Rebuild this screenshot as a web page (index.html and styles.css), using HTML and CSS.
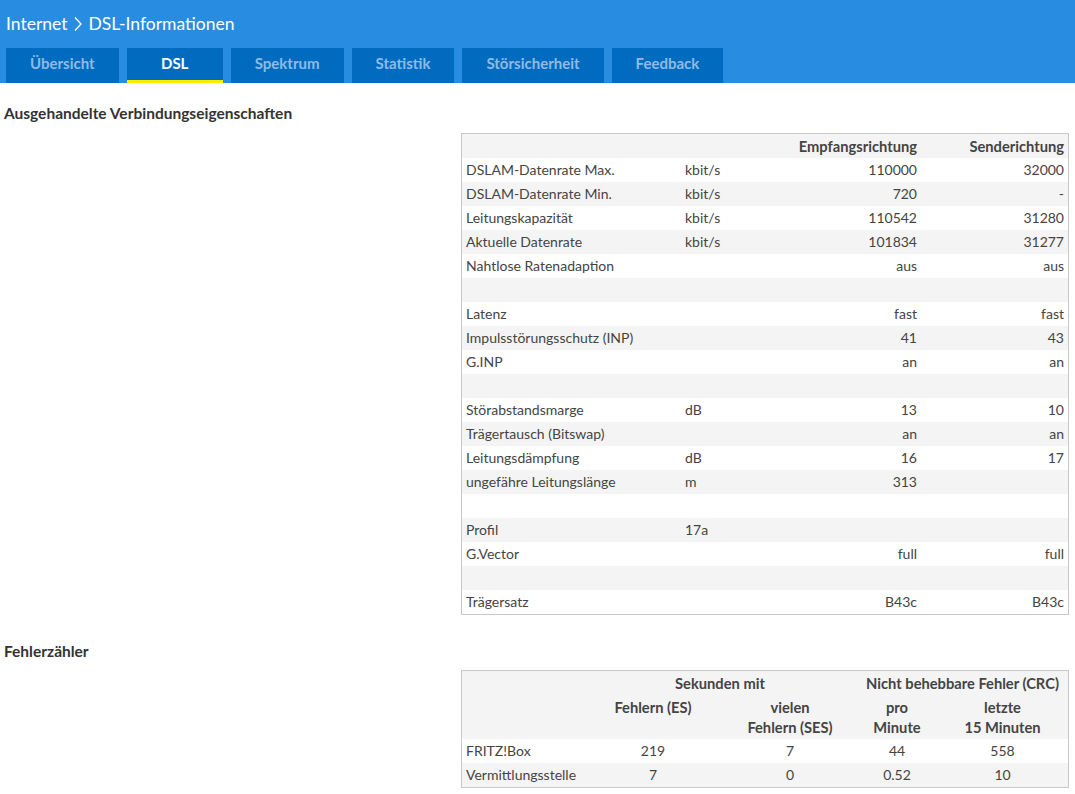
FILE: index.html
```html
<!DOCTYPE html>
<html lang="de">
<head>
<meta charset="utf-8">
<title>DSL-Informationen</title>
<link rel="stylesheet" href="styles.css">
</head>
<body>
<header class="top">
  <h1 class="crumb"><span>Internet</span><svg class="chev" width="8" height="16" viewBox="0 0 8 16"><polyline points="1,1.5 7,8 1,14.5" fill="none" stroke="#fff" stroke-width="1.3"/></svg><span>DSL-Informationen</span></h1>
  <nav class="tabs">
    <a class="tab">Übersicht</a>
    <a class="tab active">DSL</a>
    <a class="tab">Spektrum</a>
    <a class="tab">Statistik</a>
    <a class="tab">Störsicherheit</a>
    <a class="tab">Feedback</a>
  </nav>
</header>
<main class="content">
  <h2 class="sec">Ausgehandelte Verbindungseigenschaften</h2>
  <table class="grid t1">
    <colgroup><col class="c1"><col class="c2"><col class="c3"><col class="c4"></colgroup>
    <thead>
      <tr><th></th><th></th><th class="r">Empfangsrichtung</th><th class="r">Senderichtung</th></tr>
    </thead>
    <tbody>
      <tr><td>DSLAM-Datenrate Max.</td><td>kbit/s</td><td class="r">110000</td><td class="r">32000</td></tr>
      <tr><td>DSLAM-Datenrate Min.</td><td>kbit/s</td><td class="r">720</td><td class="r">-</td></tr>
      <tr><td>Leitungskapazität</td><td>kbit/s</td><td class="r">110542</td><td class="r">31280</td></tr>
      <tr><td>Aktuelle Datenrate</td><td>kbit/s</td><td class="r">101834</td><td class="r">31277</td></tr>
      <tr><td>Nahtlose Ratenadaption</td><td></td><td class="r">aus</td><td class="r">aus</td></tr>
      <tr><td></td><td></td><td></td><td></td></tr>
      <tr><td>Latenz</td><td></td><td class="r">fast</td><td class="r">fast</td></tr>
      <tr><td>Impulsstörungsschutz (INP)</td><td></td><td class="r">41</td><td class="r">43</td></tr>
      <tr><td>G.INP</td><td></td><td class="r">an</td><td class="r">an</td></tr>
      <tr><td></td><td></td><td></td><td></td></tr>
      <tr><td>Störabstandsmarge</td><td>dB</td><td class="r">13</td><td class="r">10</td></tr>
      <tr><td>Trägertausch (Bitswap)</td><td></td><td class="r">an</td><td class="r">an</td></tr>
      <tr><td>Leitungsdämpfung</td><td>dB</td><td class="r">16</td><td class="r">17</td></tr>
      <tr><td>ungefähre Leitungslänge</td><td>m</td><td class="r">313</td><td class="r"></td></tr>
      <tr><td></td><td></td><td></td><td></td></tr>
      <tr><td>Profil</td><td>17a</td><td></td><td></td></tr>
      <tr><td>G.Vector</td><td></td><td class="r">full</td><td class="r">full</td></tr>
      <tr><td></td><td></td><td></td><td></td></tr>
      <tr><td>Trägersatz</td><td></td><td class="r">B43c</td><td class="r">B43c</td></tr>
    </tbody>
  </table>

  <h2 class="sec sec2">Fehlerzähler</h2>
  <table class="grid t2">
    <colgroup><col class="d1"><col class="d2"><col class="d3"><col class="d4"><col class="d5"></colgroup>
    <thead>
      <tr><th rowspan="2"></th><th colspan="2" class="c">Sekunden mit</th><th colspan="2" class="c">Nicht behebbare Fehler (CRC)</th></tr>
      <tr class="sub"><th class="c">Fehlern (ES)</th><th class="c">vielen<br>Fehlern (SES)</th><th class="c">pro<br>Minute</th><th class="c">letzte<br>15 Minuten</th></tr>
    </thead>
    <tbody>
      <tr><td>FRITZ!Box</td><td class="c">219</td><td class="c">7</td><td class="c">44</td><td class="c">558</td></tr>
      <tr><td>Vermittlungsstelle</td><td class="c">7</td><td class="c">0</td><td class="c">0.52</td><td class="c">10</td></tr>
    </tbody>
  </table>
</main>
</body>
</html>
```

FILE: styles.css
```css
* { box-sizing: border-box; }
html, body { margin: 0; padding: 0; background: #fff; }
body {
  font-family: Lato, "Open Sans", sans-serif;
  font-size: 14px;
  color: #444;
}
.top {
  background: #288ce1;
  padding: 13px 0 0 6px;
}
.crumb {
  margin: 0;
  height: 22px;
  display: flex;
  align-items: center;
  font-size: 17.5px;
  font-weight: 400;
  line-height: 22px;
  color: #fff;
}
.chev { display: block; margin: 0 6px 0 7px; }
.tabs {
  display: flex;
  gap: 8px;
  margin-top: 13px;
}
.tab {
  display: block;
  height: 35px;
  min-width: 96px;
  padding: 0 24px;
  background: #006bbf;
  color: #8dbbe8;
  font-size: 15px;
  font-weight: 700;
  line-height: 31px;
  text-align: center;
}
.tab.active {
  color: #fff;
  border-bottom: 3px solid #ffed00;
}
.content {
  padding: 0 6px 0 4px;
}
.sec {
  margin: 0;
  padding-top: 21px;
  height: 50px;
  font-size: 15.5px;
  font-weight: 700;
  line-height: 18px;
  color: #333;
}
.sec2 { padding-top: 27px; height: 55px; }
.grid {
  margin-left: auto;
  border: 1px solid #c8c8c8;
  border-collapse: separate;
  border-spacing: 0;
  table-layout: fixed;
}
.grid th, .grid td {
  padding: 2px 4px;
  height: 24px;
  line-height: 20px;
  text-align: left;
  white-space: nowrap;
}
.grid th { font-weight: 700; font-size: 14.7px; color: #444; }
.grid thead tr { background: #f4f4f4; }
.t1 tbody tr:nth-child(even) { background: #f4f4f4; }
.t2 tbody tr:nth-child(even) { background: #f4f4f4; }
.grid .r { text-align: right; }
.grid .c { text-align: center; }
.t2 .sub th { vertical-align: top; height: 44px; }
.c1 { width: 219px; }
.c2 { width: 100px; }
.c3 { width: 140px; }
.c4 { width: 147px; }
.d1 { width: 121px; }
.d2 { width: 140px; }
.d3 { width: 134px; }
.d4 { width: 80px; }
.d5 { width: 131px; }
```
